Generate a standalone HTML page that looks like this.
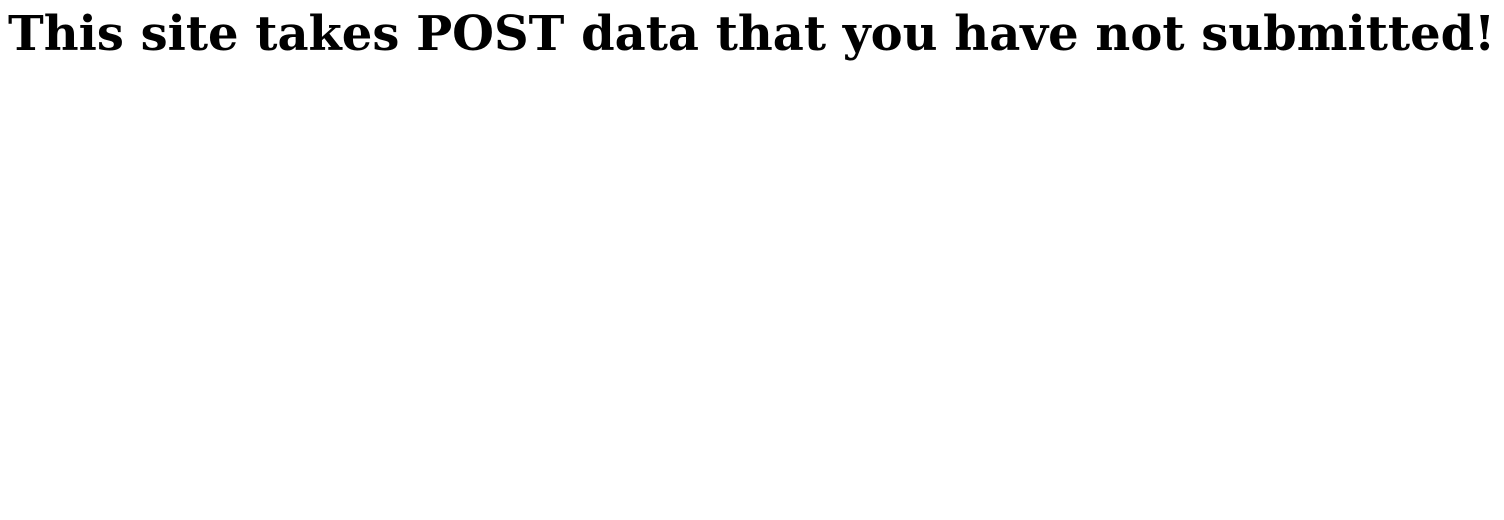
<!DOCTYPE html>
<html><head><meta charset="utf-8"><style>
html,body{margin:0;background:#fff;width:1504px;height:520px;overflow:hidden}
h1{position:absolute;left:8px;top:10px;margin:0;font-family:"DejaVu Serif",serif;font-weight:bold;font-size:48px;line-height:48px;white-space:nowrap;color:#000}
</style></head><body>
<h1>This site takes POST data that you have not submitted!</h1>
</body></html>
